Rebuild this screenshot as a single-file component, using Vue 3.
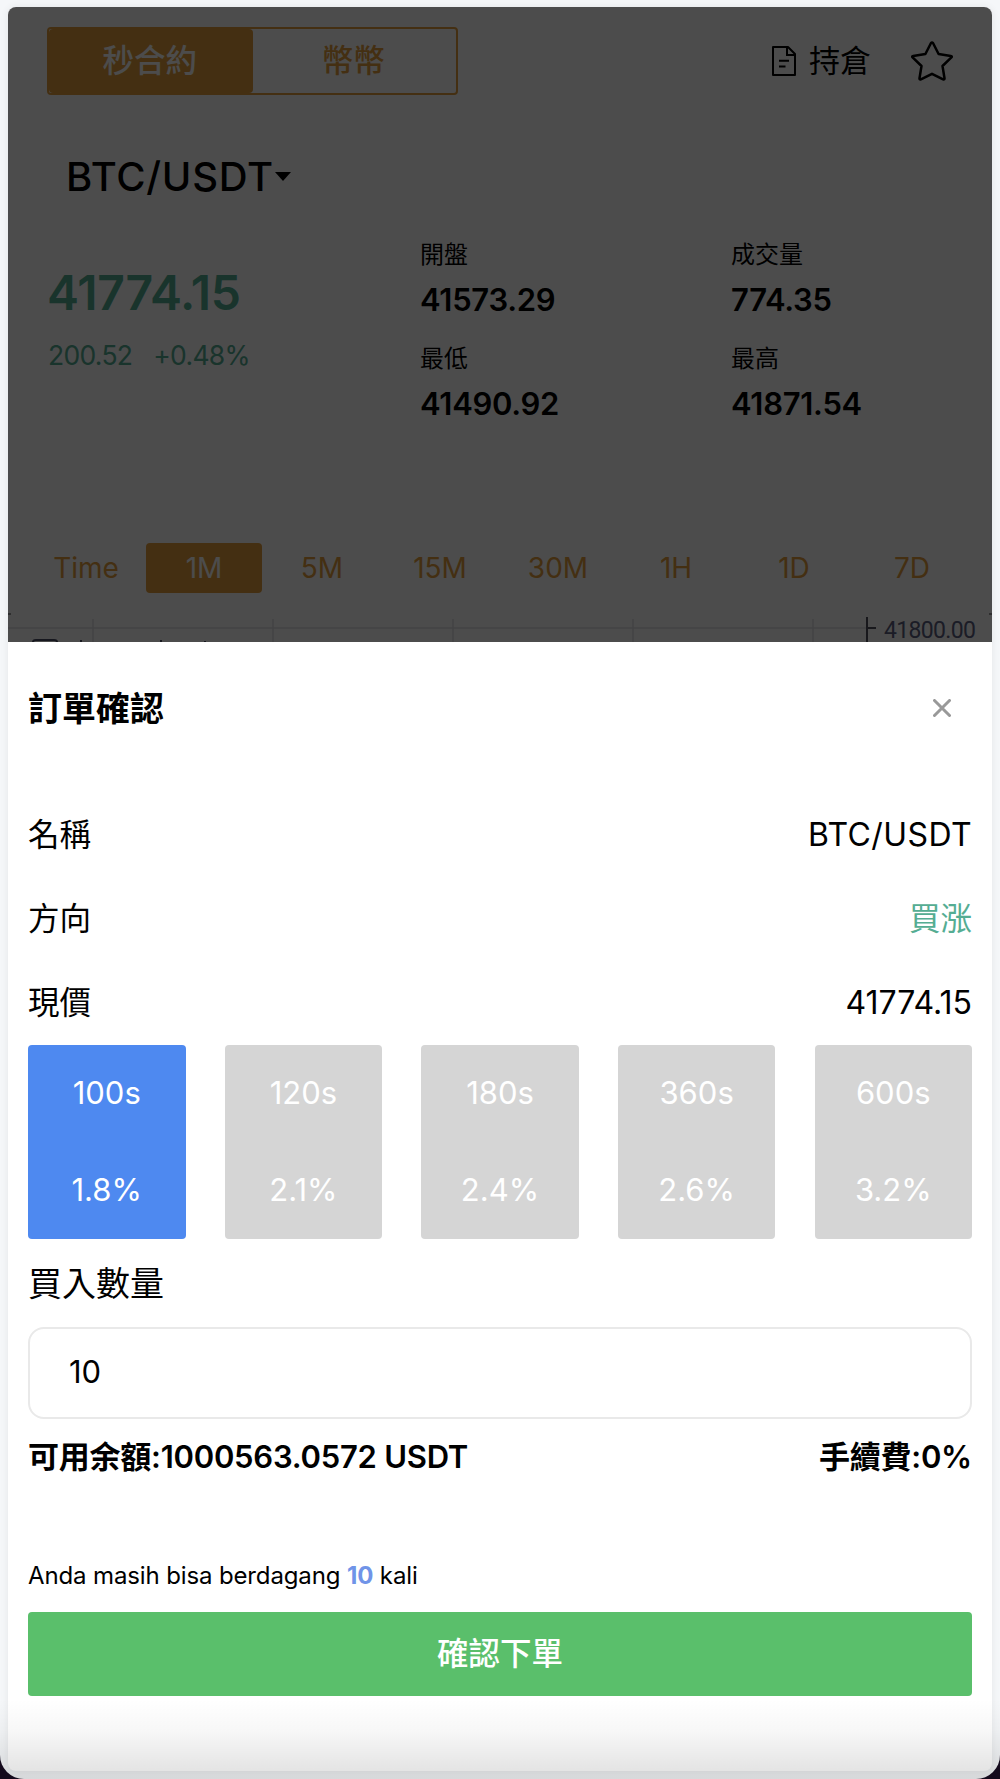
<!-- src/views/SecondContract.vue -->
<template>
  <div class="frame">
    <div class="screen">
      <div class="market">
        <header class="top-bar">
          <div class="tabs">
            <button
              v-for="tab in tabs"
              :key="tab"
              class="tab"
              :class="{ active: tab === activeTab }"
              @click="activeTab = tab"
            >{{ tab }}</button>
          </div>
          <div class="position">
            <svg class="doc-icon" viewBox="0 0 24 30" fill="none" stroke="#000" stroke-width="2">
              <path d="M1 1h15l7 7v21H1z" stroke-linejoin="round" />
              <path d="M15 1v8h8M7 14.8h10M7 20.6h6.5" />
            </svg>
            <span class="position-text">持倉</span>
          </div>
          <svg class="star-icon" viewBox="0 0 42 40" fill="none" stroke="#000" stroke-width="2.5" stroke-linejoin="round">
            <path d="M20 2q1-1.2 2 0l5.600 11 12.200 1.900q1.700.3.600 1.500L31.500 25l2 12.200q.2 1.700-1.400 1.200L21 32.800 9.900 38.400q-1.600.5-1.400-1.200l2-12.200L1.600 16.400q-1.100-1.200.6-1.500L14.400 13z" />
          </svg>
        </header>

        <div class="pair">
          <span class="pair-name">{{ pair }}</span>
          <i class="caret"></i>
        </div>

        <section class="quote">
          <div class="last">
            <div class="price">{{ price }}</div>
            <div class="change"><span>200.52</span><span class="percent">+0.48%</span></div>
          </div>
          <div class="stats">
            <div v-for="item in stats" :key="item.label" class="stat">
              <div class="stat-label">{{ item.label }}</div>
              <div class="stat-value">{{ item.value }}</div>
            </div>
          </div>
        </section>

        <nav class="periods">
          <button
            v-for="item in periods"
            :key="item"
            class="period"
            :class="{ active: item === activePeriod }"
            @click="activePeriod = item"
          >{{ item }}</button>
        </nav>

        <svg class="chart" width="984" height="29" viewBox="0 0 984 29">
          <path d="M0 15H858M85 6V29M265 6V29M445 6V29M625 6V29M805 6V29" stroke="#e1e1e4" stroke-width="1.500" />
          <path d="M0 1H3M981 1H984" stroke="#999" stroke-width="2" />
          <path d="M859 4V29M859 15H868" stroke="#50535e" stroke-width="2" fill="none" />
          <path d="M25 29Q25 27 28 27H46Q49 27 49 29M73 27V29M153 27V29M197 28V29" stroke="#4a4d66" stroke-width="2" fill="none" />
          <text class="axis-label" x="876" y="25" textLength="92">41800.00</text>
        </svg>

        <div class="mask"></div>
      </div>

      <section class="sheet">
        <div class="sheet-head">
          <h2 class="sheet-title">訂單確認</h2>
          <svg class="close-icon" viewBox="0 0 18 18" stroke="#999" stroke-width="3" stroke-linecap="round">
            <path d="M1.500 1.500l15 15M16.500 1.500l-15 15" />
          </svg>
        </div>

        <div class="row"><span class="row-name">名稱</span><span class="row-pair">{{ pair }}</span></div>
        <div class="row"><span class="row-name">方向</span><span class="row-name up">買涨</span></div>
        <div class="row"><span class="row-name">現價</span><span class="row-price">{{ price }}</span></div>

        <div class="options">
          <div
            v-for="item in options"
            :key="item.time"
            class="option"
            :class="{ active: item.time === activeTime }"
            @click="activeTime = item.time"
          >
            <span>{{ item.time }}</span>
            <span>{{ item.rate }}</span>
          </div>
        </div>

        <div class="amount-label">買入數量</div>
        <input v-model="amount" class="amount" type="text" />

        <div class="balance">
          <span class="available">可用余額:1000563.0572 USDT</span>
          <span class="fee">手續費:0%</span>
        </div>

        <p class="remain">Anda masih bisa berdagang <b>10</b> kali</p>
        <button class="submit">確認下單</button>
      </section>
    </div>
    <div class="fade"></div>
  </div>
</template>

<script setup>
import { ref } from 'vue';

const pair = 'BTC/USDT';
const price = '41774.15';

const tabs = ['秒合約', '幣幣'];
const activeTab = ref('秒合約');

const stats = [
  { label: '開盤', value: '41573.29' },
  { label: '成交量', value: '774.35' },
  { label: '最低', value: '41490.92' },
  { label: '最高', value: '41871.54' },
];

const periods = ['Time', '1M', '5M', '15M', '30M', '1H', '1D', '7D'];
const activePeriod = ref('1M');

const options = [
  { time: '100s', rate: '1.8%' },
  { time: '120s', rate: '2.1%' },
  { time: '180s', rate: '2.4%' },
  { time: '360s', rate: '2.6%' },
  { time: '600s', rate: '3.2%' },
];
const activeTime = ref('100s');
const amount = ref('10');
</script>

<style>
body {
  background: #140a1c;
}
</style>

<style scoped>
.frame {
  position: relative;
  box-sizing: border-box;
  height: 1779px;
  padding: 7px 8px 8px;
  background: #f5f7f9;
  border-radius: 0 0 24px 24px;
  overflow: hidden;
  font-family: Inter, "Noto Sans CJK TC", sans-serif;
  font-size: 31px;
  color: #000;
}

.frame * {
  box-sizing: border-box;
}

button {
  padding: 0;
  border: none;
  background: none;
  font: inherit;
}

.screen {
  height: 1764px;
  border-radius: 8px;
  overflow: hidden;
  background: #fff;
  box-shadow: 0 0 8px rgba(0, 0, 0, 0.07);
}

.market {
  position: relative;
  height: 635px;
  overflow: hidden;
}

.mask {
  position: absolute;
  inset: 0;
  background: rgba(0, 0, 0, 0.7);
}

.top-bar {
  display: flex;
  align-items: center;
  height: 68px;
  margin: 20px 39px 0;
}

.tabs {
  display: flex;
  width: 411px;
  height: 68px;
  border: 2px solid #e49e3c;
  border-radius: 4px;
}

.tab {
  flex: 1;
  padding: 0 2px 6px 0;
  border-radius: 4px;
  color: #e49e3c;
  font-size: 31.500px;
  font-weight: 500;
}

.tab.active {
  background: #e49e3c;
  color: #fff;
}

.position {
  display: flex;
  align-items: center;
  gap: 13px;
  margin-left: auto;
}

.position-text {
  padding-bottom: 5px;
}

.doc-icon {
  width: 24px;
  height: 30px;
}

.star-icon {
  width: 42px;
  height: 40px;
  margin-left: 40px;
}

.pair {
  display: flex;
  align-items: center;
  height: 60px;
  margin: 51px 0 0 58px;
}

.pair-name {
  font-size: 40px;
  font-weight: 500;
  letter-spacing: 0.700px;
}

.caret {
  margin-left: 1px;
  border: 8px solid transparent;
  border-top: 9px solid #000;
  border-bottom: 0;
}

.quote {
  display: flex;
  height: 208px;
  margin-top: 29px;
}

.last {
  width: 412px;
  padding: 28px 0 0 39px;
  color: #55ad93;
}

.price {
  font-size: 48px;
  font-weight: 600;
  line-height: 60px;
  letter-spacing: -0.300px;
}

.change {
  margin-top: 15px;
  padding-left: 1px;
  font-size: 26.500px;
  line-height: 34px;
  letter-spacing: -0.700px;
}

.percent {
  margin-left: 21px;
}

.stats {
  display: grid;
  grid-template-columns: 311px 1fr;
  grid-auto-rows: 104px;
  flex: 1;
}

.stat-label {
  font-size: 24px;
  line-height: 40px;
}

.stat-value {
  font-weight: 600;
  line-height: 50px;
  letter-spacing: -0.300px;
}

.periods {
  display: flex;
  margin: 100px 0 0 20px;
}

.period {
  width: 116px;
  height: 50px;
  margin-right: 2px;
  border-radius: 4px;
  color: #e49e3c;
  font-size: 28px;
  flex-shrink: 0;
}

.period.active {
  background: #e49e3c;
  color: #fff;
}

.chart {
  display: block;
  margin-top: 20px;
}

.axis-label {
  fill: #5c6080;
  font-family: Roboto, sans-serif;
  font-size: 23px;
}

.sheet {
  height: 1129px;
  padding: 26px 20px 0;
}

.sheet-head {
  display: flex;
  align-items: center;
  justify-content: space-between;
  height: 80px;
  padding-right: 21px;
}

.sheet-title {
  margin: 0;
  padding-bottom: 4px;
  font-size: 34px;
  font-weight: 700;
}

.close-icon {
  width: 18px;
  height: 18px;
}

.row {
  display: flex;
  align-items: center;
  justify-content: space-between;
  height: 84px;
  padding-bottom: 2px;
}

.row-name {
  padding-bottom: 4px;
  font-size: 31.500px;
}

.sheet-head + .row {
  margin-top: 45px;
}

.row-pair {
  font-size: 32px;
  letter-spacing: 0.400px;
}

.row-price {
  font-size: 32px;
}

.up {
  color: #55ad93;
}

.options {
  display: flex;
  justify-content: space-between;
}

.option {
  display: flex;
  flex-direction: column;
  justify-content: space-between;
  width: 157.500px;
  height: 194px;
  padding: 23px 0 24px;
  border-radius: 4px;
  background: #d5d5d5;
  color: #fff;
  line-height: 50px;
  text-align: center;
}

.option.active {
  background: #4e89f0;
}

.amount-label {
  height: 88px;
  padding-top: 1px;
  font-size: 34px;
  line-height: 88px;
}

.amount {
  display: block;
  width: 100%;
  height: 92px;
  padding: 0 39px 3px;
  border: 2px solid #e9e9e9;
  border-radius: 16px;
  outline: none;
  background: #fff;
  color: #000;
  font: inherit;
}

.balance {
  display: flex;
  justify-content: space-between;
  height: 76px;
  font-weight: 600;
  line-height: 76px;
  letter-spacing: -0.250px;
}

.remain {
  margin: 63px 0 0;
  height: 54px;
  font-size: 24px;
  line-height: 36px;
  letter-spacing: -0.130px;
}

.remain b {
  color: #7094e8;
  font-weight: 700;
}

.submit {
  display: block;
  width: 100%;
  height: 84px;
  padding-bottom: 6px;
  border-radius: 4px;
  background: #5abf6b;
  color: #fff;
  font-size: 31.500px;
  font-weight: 500;
}

/* shade along the bottom edge of the window */
.fade {
  position: absolute;
  inset: auto 0 0;
  height: 80px;
  background: linear-gradient(rgba(0, 0, 0, 0), rgba(0, 0, 0, 0.030) 40%, rgba(0, 0, 0, 0.120));
  pointer-events: none;
}
</style>
